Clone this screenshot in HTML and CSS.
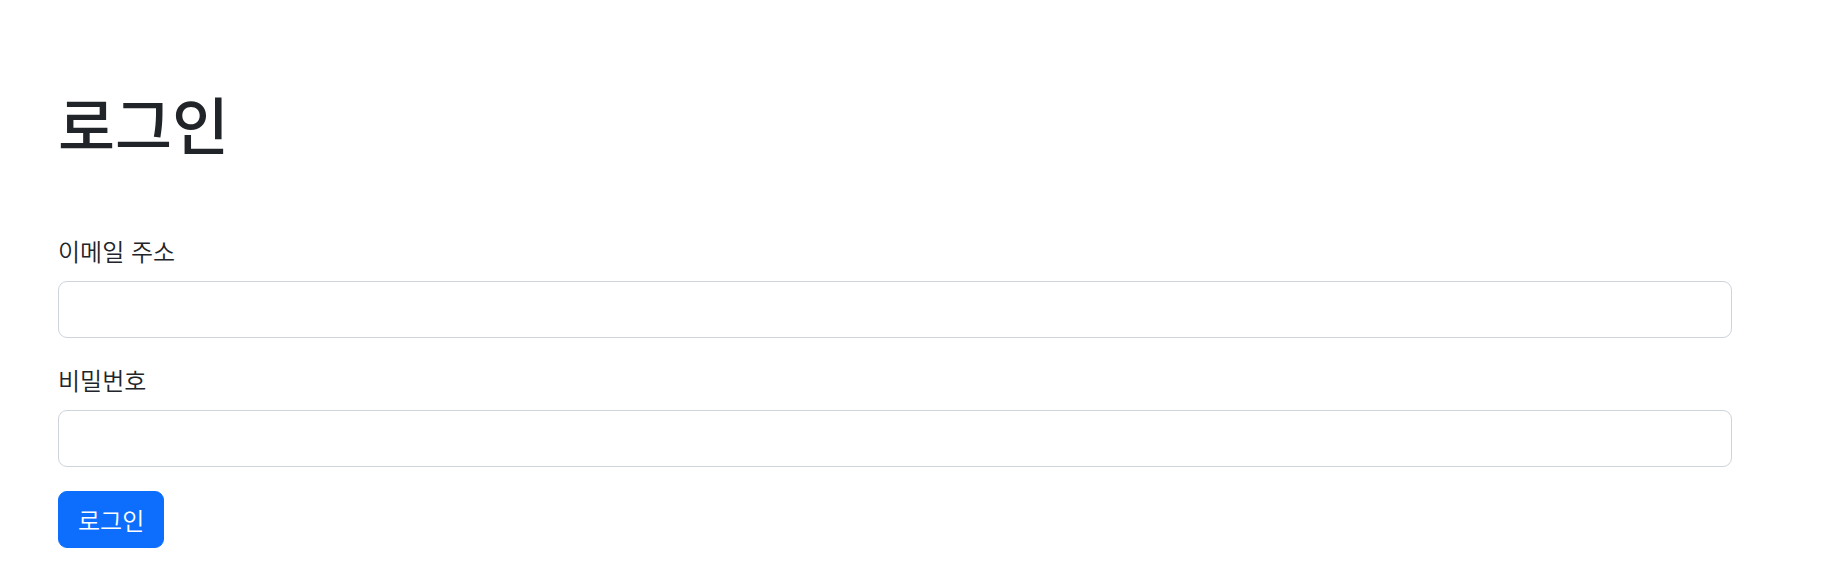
FILE: index.html
```html
<!DOCTYPE html>
<html lang="ko">
<head>
<meta charset="utf-8">
<title>로그인</title>
<link rel="stylesheet" href="styles.css">
</head>
<body>
<main class="page">
  <h1 class="title">로그인</h1>
  <form class="form">
    <div class="field">
      <label class="label" for="email">이메일 주소</label>
      <input class="input" id="email" type="email">
    </div>
    <div class="field">
      <label class="label" for="pw">비밀번호</label>
      <input class="input" id="pw" type="password">
    </div>
    <button class="btn" type="button">로그인</button>
  </form>
</main>
</body>
</html>
```

FILE: styles.css
```css
* { box-sizing: border-box; }
html, body { margin: 0; background: #fff; }
body {
  font-family: "Noto Sans CJK KR", "Noto Sans", sans-serif;
  color: #212529;
}
.page {
  width: 1732px;
  padding: 87px 0 0 58px;
}
.title {
  margin: 0 0 74px;
  font-size: 62px;
  line-height: 72px;
  font-weight: 500;
}
.form { display: flex; flex-direction: column; align-items: flex-start; }
.field { width: 100%; margin-bottom: 24px; display: flex; flex-direction: column; }
.label {
  font-size: 24px;
  line-height: 36px;
  margin-bottom: 12px;
  font-weight: 350;
}
.input {
  width: 100%;
  height: 57px;
  border: 1.5px solid #ced4da;
  border-radius: 9px;
  background: #fff;
  font-size: 24px;
  padding: 9px 18px;
}
.btn {
  height: 57px;
  padding: 0 19px;
  border: 1.5px solid #0d6efd;
  border-radius: 9px;
  background: #0d6efd;
  color: #fff;
  font-family: inherit;
  font-size: 24px;
  line-height: 36px;
  font-weight: 350;
}
```
